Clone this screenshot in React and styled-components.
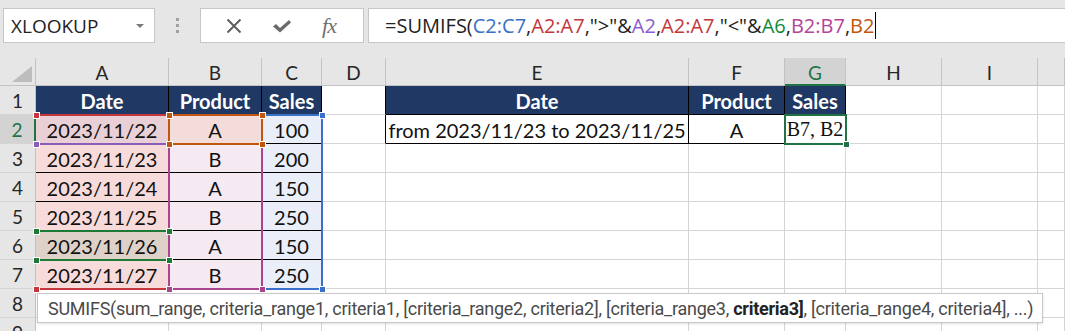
import React from "react";
import styled, { createGlobalStyle } from "styled-components";

const GRID = "#d5d5d5";
const HEAD_LINE = "#c3c3c3";
const NAVY = "#203864";
const ACTIVE = "#217346";

const GlobalStyle = createGlobalStyle`
  html, body {
    margin: 0;
    padding: 0;
    background: #ffffff;
    overflow: hidden;
  }
  body {
    font-family: "Lato", "Liberation Sans", sans-serif;
  }
`;

const Page = styled.div`
  width: 1065px;
  height: 331px;
  overflow: hidden;
  background: #ffffff;
`;

/* ---------- formula bar ---------- */
const Toolbar = styled.div`
  display: flex;
  align-items: flex-start;
  height: 58px;
  padding: 8px 0 0 3px;
  box-sizing: border-box;
  background: #e6e6e6;
`;
const NameBox = styled.div`
  position: relative;
  display: flex;
  align-items: center;
  width: 152px;
  height: 35px;
  box-sizing: border-box;
  padding-left: 7px;
  background: #fff;
  border: 1px solid #c6c6c6;
  font-family: "Open Sans", "Noto Sans", sans-serif;
  font-size: 19px;
  color: #222;
  &::after {
    content: "";
    position: absolute;
    right: 10px;
    top: 15px;
    border-left: 4px solid transparent;
    border-right: 4px solid transparent;
    border-top: 4px solid #7a7a7a;
  }
`;
const Grip = styled.div`
  display: flex;
  flex-direction: column;
  align-items: center;
  gap: 3px;
  width: 45px;
  padding-top: 10px;
  span {
    width: 3px;
    height: 3px;
    background: #a0a0a0;
  }
`;
const FxBox = styled.div`
  display: flex;
  align-items: center;
  justify-content: space-around;
  width: 164px;
  height: 35px;
  box-sizing: border-box;
  padding: 0 12px 0 10px;
  background: #fff;
  border: 1px solid #c6c6c6;
  color: #666;
`;
const FxLabel = styled.span`
  font-family: "Liberation Serif", serif;
  font-style: italic;
  font-size: 22px;
  color: #707070;
  letter-spacing: -1px;
`;
const FormulaBox = styled.div`
  flex: 1;
  display: flex;
  align-items: center;
  height: 35px;
  margin-left: 4px;
  margin-right: -4px;
  box-sizing: border-box;
  padding-left: 16px;
  background: #fff;
  border: 1px solid #c6c6c6;
  font-family: "Open Sans", "Noto Sans", sans-serif;
  font-size: 20px;
  color: #222;
  white-space: nowrap;
`;
const Ref = styled.span`
  color: ${(p) => p.$c};
`;
const Caret = styled.span`
  display: inline-block;
  width: 1px;
  height: 27px;
  margin-left: 1px;
  background: #000;
`;

/* ---------- sheet ---------- */
const Sheet = styled.div`
  position: relative;
  display: grid;
  grid-template-columns: 36px 133px 93px 60px 64px 303px 96px 61px 96px 96px 1fr;
  grid-template-rows: 28px repeat(9, 29px);
`;
const Corner = styled.div`
  position: relative;
  background: #e6e6e6;
  border-right: 1px solid ${HEAD_LINE};
  border-bottom: 1px solid ${HEAD_LINE};
  &::after {
    content: "";
    position: absolute;
    right: 3px;
    bottom: 3px;
    border-left: 20px solid transparent;
    border-bottom: 16px solid #bdbdbd;
  }
`;
const ColHead = styled.div`
  display: flex;
  align-items: center;
  justify-content: center;
  box-sizing: border-box;
  background: ${(p) => (p.$active ? "#d3d3d3" : "#e6e6e6")};
  color: ${(p) => (p.$active ? ACTIVE : "#262626")};
  border-right: 1px solid ${HEAD_LINE};
  border-bottom: ${(p) => (p.$active ? `2px solid ${ACTIVE}` : `1px solid ${HEAD_LINE}`)};
  font-size: 19px;
  padding-top: 2px;
`;
const RowHead = styled.div`
  display: flex;
  align-items: center;
  justify-content: center;
  box-sizing: border-box;
  background: ${(p) => (p.$active ? "#d3d3d3" : "#e6e6e6")};
  color: ${(p) => (p.$active ? ACTIVE : "#262626")};
  border-right: ${(p) => (p.$active ? `2px solid ${ACTIVE}` : `1px solid ${HEAD_LINE}`)};
  border-bottom: 1px solid ${GRID};
  font-size: 19px;
`;
const Cell = styled.div`
  display: flex;
  align-items: center;
  justify-content: center;
  box-sizing: border-box;
  overflow: hidden;
  white-space: nowrap;
  background: ${(p) => p.$fill || "#fff"};
  color: ${(p) => (p.$head ? "#fff" : "#111")};
  font-weight: ${(p) => (p.$head ? 700 : 400)};
  font-family: ${(p) => (p.$serif ? '"Liberation Serif", serif' : '"Lato", sans-serif')};
  font-size: 20px;
  border-right: 1px solid ${(p) => p.$right || GRID};
  border-bottom: 1px solid ${(p) => p.$bottom || GRID};
  padding-top: 1px;
`;

const RangeBox = styled.div`
  position: absolute;
  box-sizing: border-box;
  pointer-events: none;
  border: 2px solid ${(p) => p.$c};
  ${(p) => (p.$noLeft ? "border-left-color: transparent;" : "")}
`;
const Handle = styled.div`
  position: absolute;
  width: 7px;
  height: 7px;
  box-sizing: border-box;
  background: ${(p) => p.$c};
  border: 1px solid #fff;
`;
const Tooltip = styled.div`
  position: absolute;
  left: 37px;
  top: 235px;
  width: 1006px;
  height: 30px;
  box-sizing: border-box;
  display: flex;
  align-items: center;
  padding-left: 10px;
  background: #fff;
  border: 1px solid #c8c8c8;
  box-shadow: 0 1px 2px rgba(0, 0, 0, 0.12);
  font-family: "Roboto", "Liberation Sans", sans-serif;
  font-size: 18px;
  letter-spacing: -0.25px;
  color: #4a4a4a;
  white-space: nowrap;
  b {
    color: #222;
  }
`;

const COLS = ["A", "B", "C", "D", "E", "F", "G", "H", "I", "J"];
const RED = "#c4373d";
const PURPLE = "#8b5cb8";
const GREEN = "#1d7a34";
const BLUE = "#3b70c8";
const MAGENTA = "#a9448f";
const ORANGE = "#c0560f";

const data = [
  ["Date", "Product", "Sales"],
  ["2023/11/22", "A", "100"],
  ["2023/11/23", "B", "200"],
  ["2023/11/24", "A", "150"],
  ["2023/11/25", "B", "250"],
  ["2023/11/26", "A", "150"],
  ["2023/11/27", "B", "250"],
];

function cellFor(r, c) {
  // r: 1..9, c: 0..9 (A..J)
  const p = { text: "" };
  if (r <= 7 && c <= 2) {
    p.text = data[r - 1][c];
    p.right = "#000";
    p.bottom = "#000";
    if (r === 1) {
      p.head = true;
      p.fill = NAVY;
    } else if (c === 0) {
      p.fill = r === 2 ? "#e9cfd6" : r === 6 ? "#ded2c8" : "#f7dbdb";
    } else if (c === 1) {
      p.fill = r === 2 ? "#f3dcd9" : "#f6eaf2";
    } else {
      p.fill = "#e9eef8";
    }
  }
  if (c === 3 && r <= 2) p.right = "#000";
  if (r <= 2 && c >= 4 && c <= 6) {
    p.right = "#000";
    p.bottom = "#000";
    if (r === 1) {
      p.head = true;
      p.fill = NAVY;
      p.text = ["Date", "Product", "Sales"][c - 4];
    } else {
      p.text = ["from 2023/11/23 to 2023/11/25", "A", "B7, B2"][c - 4];
      p.serif = c === 6;
    }
  }
  return p;
}

// range outlines, sheet coordinates of the grid lines
const ranges = [
  { c: PURPLE, x0: 35, x1: 168, y0: 56, y1: 85, noLeft: true },
  { c: RED, x0: 35, x1: 168, y0: 56, y1: 230, noLeft: true },
  { c: GREEN, x0: 35, x1: 168, y0: 172, y1: 201, noLeft: true },
  { c: BLUE, x0: 261, x1: 321, y0: 56, y1: 230 },
  { c: MAGENTA, x0: 168, x1: 261, y0: 56, y1: 230 },
  { c: ORANGE, x0: 168, x1: 261, y0: 56, y1: 85 },
  { c: ACTIVE, x0: 784, x1: 845, y0: 56, y1: 85 },
];
const handles = [
  [RED, 35, 56], [PURPLE, 35, 85], [RED, 35, 230],
  [GREEN, 35, 172], [GREEN, 35, 201], [GREEN, 168, 172], [GREEN, 168, 201],
  [ORANGE, 168, 56], [ORANGE, 261, 56], [ORANGE, 168, 85], [ORANGE, 261, 85],
  [MAGENTA, 168, 230], [MAGENTA, 261, 230],
  [BLUE, 321, 56], [BLUE, 321, 230],
  [ACTIVE, 845, 85],
];

function App() {
  const rows = [];
  for (let r = 1; r <= 9; r++) {
    rows.push(
      <RowHead key={`h${r}`} $active={r === 2}>
        {r}
      </RowHead>
    );
    COLS.forEach((col, c) => {
      const p = cellFor(r, c);
      rows.push(
        <Cell
          key={`${col}${r}`}
          $fill={p.fill}
          $head={p.head}
          $serif={p.serif}
          $right={p.right}
          $bottom={p.bottom}
        >
          {p.text}
        </Cell>
      );
    });
  }

  return (
    <Page>
      <GlobalStyle />
      <Toolbar>
        <NameBox>XLOOKUP</NameBox>
        <Grip>
          <span />
          <span />
          <span />
        </Grip>
        <FxBox>
          <svg width="16" height="16" viewBox="0 0 16 16">
            <path d="M1.5 1.5 L14.5 14.5 M14.5 1.5 L1.5 14.5" stroke="#5a5a5a" strokeWidth="1.8" fill="none" />
          </svg>
          <svg width="20" height="16" viewBox="0 0 20 16">
            <path d="M1 8.5 L4 6 L8 10 L17 2 L19 4.5 L8 14.5 Z" fill="#6a6a6a" />
          </svg>
          <FxLabel>fx</FxLabel>
        </FxBox>
        <FormulaBox>
          =SUMIFS(<Ref $c={BLUE}>C2:C7</Ref>,<Ref $c={RED}>A2:A7</Ref>,"&gt;"&amp;
          <Ref $c="#8e5cd0">A2</Ref>,<Ref $c={RED}>A2:A7</Ref>,"&lt;"&amp;
          <Ref $c="#138a3a">A6</Ref>,<Ref $c="#b4449a">B2:B7</Ref>,
          <Ref $c={ORANGE}>B2</Ref>
          <Caret />
        </FormulaBox>
      </Toolbar>
      <Sheet>
        <Corner />
        {COLS.map((col) => (
          <ColHead key={col} $active={col === "G"}>
            {col === "J" ? "" : col}
          </ColHead>
        ))}
        {rows}
        {ranges.map((g, i) => (
          <RangeBox
            key={`r${i}`}
            $c={g.c}
            $noLeft={g.noLeft}
            style={{ left: g.x0, top: g.y0, width: g.x1 - g.x0 + 2, height: g.y1 - g.y0 + 2 }}
          />
        ))}
        {handles.map(([c, x, y], i) => (
          <Handle key={`k${i}`} $c={c} style={{ left: x - 2.5, top: y - 2.5 }} />
        ))}
        <Tooltip>
          SUMIFS(sum_range, criteria_range1, criteria1, [criteria_range2, criteria2],
          [criteria_range3,&nbsp;<b>criteria3]</b>, [criteria_range4, criteria4], ...)
        </Tooltip>
      </Sheet>
    </Page>
  );
}

export default App;
